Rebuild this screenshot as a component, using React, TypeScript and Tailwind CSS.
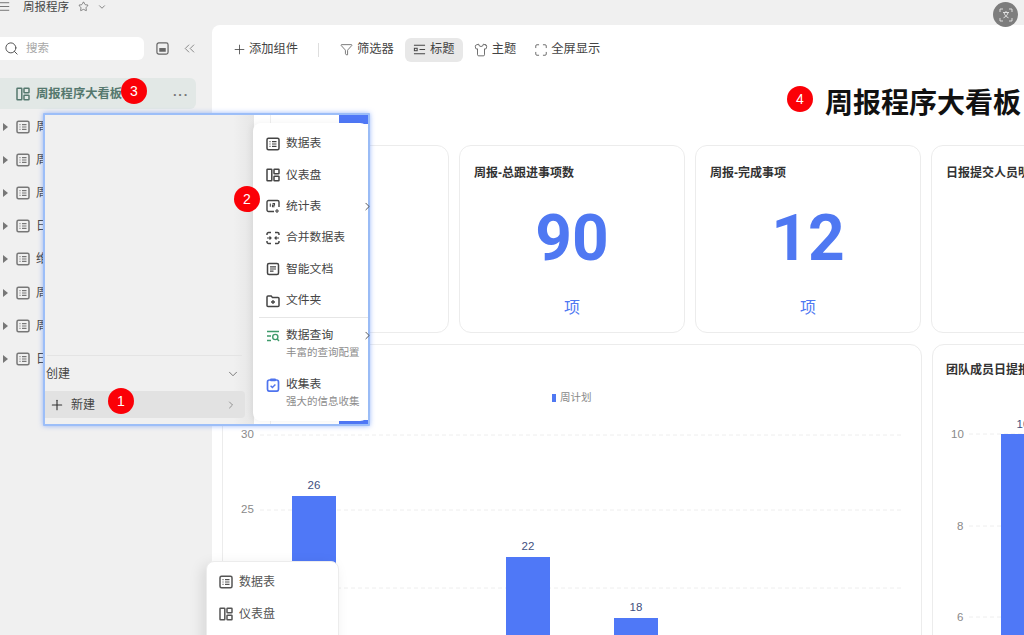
import { ChevronDown, ChevronRight, ChevronsLeft, Funnel, Maximize, Menu, Plus, Search, Shirt, Star } from "lucide-react";

const font = { cjk: "font-['Liberation_Sans','Noto_Sans_CJK_SC',sans-serif]" };

function TableIcon({ className = "" }: { className?: string }) {
  return (
    <svg viewBox="0 0 14 14" width="14" height="14" fill="none" stroke="currentColor" className={className}>
      <rect x="1" y="1.2" width="12" height="11.6" rx="1.5" strokeWidth="1.5" />
      <path d="M3.5 4.7h1M3.5 7h1M3.500 9.300h1M6 4.700h4.500M6 7h4.500M6 9.300h4.500" strokeWidth="1.2" />
    </svg>
  );
}

function BoardIcon({ className = "" }: { className?: string }) {
  return (
    <svg viewBox="0 0 14 14" width="14" height="14" fill="none" stroke="currentColor" strokeWidth="1.5" className={className}>
      <rect x="1" y="1.2" width="4.8" height="11.6" rx=".6" />
      <rect x="8" y="1.2" width="5" height="4.6" rx=".6" />
      <rect x="8" y="8.2" width="5" height="4.6" rx=".6" />
    </svg>
  );
}

function StatIcon() {
  return (
    <svg viewBox="0 0 14 14" width="14" height="14" fill="none" stroke="currentColor" strokeWidth="1.4">
      <path d="M8 12.5H2.500A1.500 1.500 0 0 1 1 11V3a1.500 1.500 0 0 1 1.500-1.500h9A1.500 1.500 0 0 1 13 3v5" />
      <path d="M4.300 4.500v3.300M6.500 4.500h2v1.600h-2v1.700h2M11 10v4M9 12h4" strokeWidth="1.1" />
    </svg>
  );
}

function MergeIcon() {
  return (
    <svg viewBox="0 0 14 14" width="14" height="14" fill="none" stroke="currentColor" strokeWidth="1.5">
      <path d="M1 4V3a1.500 1.500 0 0 1 1.500-1.500H5M9 1.500h2.500A1.500 1.500 0 0 1 13 3v1M13 10v1a1.500 1.500 0 0 1-1.500 1.500H9M5 12.500H2.500A1.500 1.500 0 0 1 1 11v-1" />
      <path d="M1 7h4M3.500 5.500 5 7 3.500 8.500M13 7H9M10.500 5.500 9 7l1.500 1.500" strokeWidth="1.200" />
    </svg>
  );
}

function DocIcon() {
  return (
    <svg viewBox="0 0 14 14" width="14" height="14" fill="none" stroke="currentColor" strokeWidth="1.5">
      <rect x="1.500" y="1.500" width="11" height="11" rx="1.500" />
      <path d="M4 4.800h6M4 7h6M4 9.200h3.500" strokeWidth="1.200" />
    </svg>
  );
}

function FolderIcon() {
  return (
    <svg viewBox="0 0 14 14" width="14" height="14" fill="none" stroke="currentColor" strokeWidth="1.5">
      <path d="M1 3a1 1 0 0 1 1-1h3.200l1.300 1.600H12a1 1 0 0 1 1 1V11.500a1 1 0 0 1-1 1H2a1 1 0 0 1-1-1z" />
      <path d="M7 6v4M5 8h4" strokeWidth="1.300" />
    </svg>
  );
}

function QueryIcon() {
  return (
    <svg viewBox="0 0 14 14" width="14" height="14" fill="none" stroke="#3f9b6b" strokeWidth="1.400">
      <path d="M1 2.500h12M1 7h4M1 11.500h4" />
      <circle cx="9.300" cy="8" r="2.600" />
      <path d="m11.200 10 1.800 2" />
    </svg>
  );
}

function FormIcon() {
  return (
    <svg viewBox="0 0 14 14" width="14" height="14" fill="none">
      <rect x="1.500" y="2" width="11" height="11.200" rx="2" stroke="#4f74ee" strokeWidth="1.700" />
      <rect x="4" y=".6" width="6" height="2.600" rx="1" fill="#4f74ee" />
      <path d="m4.600 7.800 1.800 1.800 3-3" stroke="#4f74ee" strokeWidth="1.400" />
    </svg>
  );
}

function TitleIcon() {
  return (
    <svg viewBox="0 0 14 14" width="13" height="13" fill="none" stroke="currentColor" strokeWidth="1.100">
      <path d="M1 2.500h12M1 11.500h12" />
      <rect x="1.500" y="5.700" width="3" height="2.600" />
      <path d="M7 7h6" />
    </svg>
  );
}

function Badge({ n, className }: { n: number; className: string }) {
  return (
    <div className={`absolute flex h-[26px] w-[26px] items-center justify-center rounded-full bg-[#fb0007] text-[14px] text-white font-['Liberation_Sans',sans-serif] ${className}`}>
      {n}
    </div>
  );
}

const sidebarRows = ["周报进度明细", "周报完成事项", "周报计划明细", "日报提交记录", "维护人员名单", "周报汇总信息", "周报提交记录", "日报汇总信息"];

function Sidebar() {
  return (
    <aside className="flex w-[212px] shrink-0 flex-col">
      <div className="mt-3 flex items-center">
        <div className="flex h-[23px] w-[144px] items-center gap-[7px] rounded-r-md bg-white pl-1 text-[11.5px] text-[#a8a8a8]">
          <Search size={15} strokeWidth={1.6} className="text-[#555]" />
          搜索
        </div>
        <svg viewBox="0 0 14 14" width="13" height="13" fill="none" className="ml-[12px] text-[#666]">
          <rect x="1" y="1" width="12" height="12" rx="2" stroke="currentColor" strokeWidth="1.300" />
          <rect x="3.500" y="6.500" width="7" height="4" fill="currentColor" />
        </svg>
        <ChevronsLeft size={17} strokeWidth={1.200} className="ml-[12px] text-[#777]" />
      </div>
      <div className="mt-[18px] flex h-[31px] w-[196px] items-center rounded-r-md bg-[#e2e8e6] pl-[16px] pr-[7px] pt-[1px] text-[12.300px] font-bold text-[#55786e]">
        <BoardIcon className="mr-[6px]" />
        周报程序大看板
        <span className="ml-auto text-[13px] leading-none tracking-[1px] text-[#777]">···</span>
      </div>
      <div className="mt-[1px] flex flex-col">
        {sidebarRows.map((name) => (
          <div key={name} className="flex h-[33.200px] items-center pl-[3px] text-[12px] text-[#444]">
            <span className="mr-[8px] h-0 w-0 border-y-[4px] border-l-[5px] border-y-transparent border-l-[#777]" />
            <TableIcon className="mr-[6px] text-[#777]" />
            {name}
          </div>
        ))}
      </div>
    </aside>
  );
}

function Toolbar() {
  return (
    <div className="flex h-[48px] shrink-0 items-center pl-[20px] pt-[1px] text-[12.250px] text-[#444]">
      <Plus size={15} strokeWidth={1.300} className="mr-[2px]" />
      添加组件
      <span className="ml-[20px] mr-[21px] h-[14px] w-px bg-[#dedede]" />
      <Funnel size={13} strokeWidth={1.300} className="mr-[4px]" />
      筛选器
      <div className="ml-[11px] mr-[11px] flex h-[24px] w-[58px] items-center justify-center gap-[4px] rounded-md bg-[#e8e8e8]">
        <TitleIcon />
        标题
      </div>
      <Shirt size={14} strokeWidth={1.300} className="mr-[4px]" />
      主题
      <Maximize size={14} strokeWidth={1.300} className="ml-[18px] mr-[3px]" />
      全屏显示
    </div>
  );
}

function StatCard({ title, value }: { title: string; value: number }) {
  return (
    <div className="flex h-[188px] w-[226px] shrink-0 flex-col rounded-xl border border-[#ececec] px-[14px] pt-[18px]">
      <div className="mt-[1px] text-[12px] font-bold leading-[17px] text-[#333] whitespace-nowrap">{title}</div>
      <div className="mt-[17px] text-center font-['Roboto',sans-serif] text-[64px] font-bold leading-[80px] text-[#4f78f2]">{value}</div>
      <div className="mt-[17px] text-center text-[16px] leading-[24px] text-[#4f78f2]">项</div>
    </div>
  );
}

const weekBars = [
  { x: 70, y: 151, label: 26 },
  { x: 284, y: 212, label: 22 },
  { x: 392, y: 273, label: 18 },
];

function WeekChart() {
  return (
    <div className="h-[300px] w-[700px] shrink-0 rounded-t-xl border border-[#ececec]">
      <svg width="698" height="298" className="font-['Liberation_Sans',sans-serif]">
        <rect x="329" y="49" width="4" height="8" fill="#4f78f2" />
        <text x="337" y="56" fontSize="10.500" fill="#888" fontFamily="'Noto Sans CJK SC',sans-serif">周计划</text>
        {[{ y: 90, v: 30 }, { y: 165, v: 25 }, { y: 243, v: 20 }].map((t) => (
          <g key={t.v}>
            <line x1="37" x2="679" y1={t.y} y2={t.y} stroke="#eeeeee" strokeDasharray="4 3" />
            <text x="18" y={t.y + 3} fontSize="11.500" fill="#8a8a8a">{t.v}</text>
          </g>
        ))}
        {weekBars.map((b) => (
          <g key={b.label}>
            <rect x={b.x - 1} y={b.y} width="44" height="300" fill="#4f78f7" />
            <text x={b.x + 21} y={b.y - 7} fontSize="11.500" textAnchor="middle" fill="#3f5080">{b.label}</text>
          </g>
        ))}
      </svg>
    </div>
  );
}

function MemberChart() {
  return (
    <div className="h-[300px] w-[400px] shrink-0 rounded-t-xl border border-[#ececec]">
      <div className="pl-[13px] pt-[17px] text-[12px] font-bold leading-[17px] text-[#333]">团队成员日提报统计</div>
      <svg width="398" height="260" className="font-['Liberation_Sans',sans-serif]">
        {[{ y: 55, v: 10, x: 18 }, { y: 147, v: 8, x: 24 }, { y: 238, v: 6, x: 24 }].map((t) => (
          <g key={t.v}>
            <line x1="36" x2="380" y1={t.y} y2={t.y} stroke="#eeeeee" strokeDasharray="4 3" />
            <text x={t.x} y={t.y + 4} fontSize="11.500" fill="#8a8a8a">{t.v}</text>
          </g>
        ))}
        <rect x="68" y="55" width="44" height="210" fill="#4f78f7" />
        <text x="90" y="49" fontSize="11.500" textAnchor="middle" fill="#3f5080">10</text>
      </svg>
    </div>
  );
}

function MenuRow({ icon, label, arrow, sub }: { icon: React.ReactNode; label: string; arrow?: boolean; sub?: string }) {
  return (
    <div className={`relative flex text-[#444] ${sub ? "h-[49px] pt-[9px]" : "h-[31.400px] items-center"}`}>
      <span className="ml-[13px] mr-[6px] flex h-[17px] w-[14px] items-center">{icon}</span>
      <div>
        <div className="text-[11.800px] leading-[17px]">{label}</div>
        {sub && <div className="mt-[1px] text-[10.500px] leading-[15px] text-[#8c8c8c] whitespace-nowrap">{sub}</div>}
      </div>
      {arrow && <ChevronRight size={13} strokeWidth={1.800} className={`absolute right-[-6px] text-[#555] ${sub ? "top-[11px]" : "top-[9px]"}`} />}
    </div>
  );
}

function CreatePopup() {
  return (
    <div className="absolute left-[43px] top-[113px] flex h-[313px] w-[327px] rounded-[1px] border-2 border-[#9cbef8] bg-white shadow-[0_0_5px_rgba(90,140,250,.6)]">
      {/* left column */}
      <div className="flex w-[209px] shrink-0 flex-col justify-end bg-[#f0f0f0] bg-gradient-to-r from-[#f0f0f0] from-90% to-[#e6e6e6] pb-[6px]">
        <div className="ml-[2px] w-[195px] border-t border-[#e4e4e4]" />
        <div className="flex h-[35px] items-center pl-[1px] pr-[7px] text-[12px] text-[#444]">
          创建
          <ChevronDown size={14} strokeWidth={1.300} className="ml-auto mr-[7px] text-[#555]" />
        </div>
        <div className="flex h-[27px] w-[200px] items-center rounded-r-sm bg-[#e2e2e2] pl-[4px] pr-[8px] text-[12px] text-[#444]">
          <Plus size={16} strokeWidth={1.700} className="mr-[6px] text-[#333]" />
          新建
          <ChevronRight size={12} strokeWidth={1.300} className="ml-auto text-[#666]" />
        </div>
      </div>
      {/* right column */}
      <div className="relative flex-1">
        <div className="absolute right-0 top-0 h-[9px] w-[29px] bg-[#4f78f7]" />
        <div className="absolute bottom-0 right-0 h-[4px] w-[29px] bg-[#4f78f7]" />
        <div className="absolute left-[16px] top-0 h-full w-px bg-[#eeeeee]" />
        <div className="absolute left-[-1px] right-0 top-[8px] flex h-[298px] flex-col rounded-lg bg-white pt-[5px] shadow-[-2px_0_6px_rgba(0,0,0,.06)]">
          <MenuRow icon={<TableIcon />} label="数据表" />
          <MenuRow icon={<BoardIcon />} label="仪表盘" />
          <MenuRow icon={<StatIcon />} label="统计表" arrow />
          <MenuRow icon={<MergeIcon />} label="合并数据表" />
          <MenuRow icon={<DocIcon />} label="智能文档" />
          <MenuRow icon={<FolderIcon />} label="文件夹" />
          <div className="ml-[6px] mt-[1px] border-t border-[#e6e6e6]" />
          <MenuRow icon={<QueryIcon />} label="数据查询" arrow sub="丰富的查询配置" />
          <MenuRow icon={<FormIcon />} label="收集表" sub="强大的信息收集" />
        </div>
      </div>
    </div>
  );
}

export default function App() {
  return (
    <div className={`relative flex h-[635px] w-[1024px] flex-col overflow-hidden bg-[#f0f0f0] ${font.cjk}`}>
      {/* top bar */}
      <div className="flex h-[25px] shrink-0 items-start text-[#444]">
        <Menu size={13} strokeWidth={1.300} className="ml-[-2px]" />
        <span className="ml-[12px] text-[11.500px] leading-[14px]">周报程序</span>
        <Star size={11} strokeWidth={1.300} className="ml-[9px] mt-[1px]" />
        <ChevronDown size={10} strokeWidth={1.500} className="ml-[8px] mt-[2px]" />
      </div>

      <div className="flex min-h-0 flex-1">
        <Sidebar />
        <main className="flex min-w-0 flex-1 flex-col overflow-hidden rounded-tl-lg bg-white">
          <Toolbar />
          <h1 className="mt-[14px] whitespace-nowrap pl-[613px] text-[28px] font-bold leading-[34px] text-[#111]">周报程序大看板</h1>
          <div className="ml-[11px] mt-[24px] flex gap-[10px]">
            <StatCard title="周报-本周事项数" value={8} />
            <StatCard title="周报-总跟进事项数" value={90} />
            <StatCard title="周报-完成事项" value={12} />
            <StatCard title="日报提交人员明细" value={8} />
          </div>
          <div className="ml-[10px] mt-[11px] flex gap-[10px]">
            <WeekChart />
            <MemberChart />
          </div>
        </main>
      </div>

      <CreatePopup />

      {/* bottom menu */}
      <div className="absolute left-[206px] top-[561px] flex h-[90px] w-[133px] flex-col gap-[12px] rounded-lg border border-[#ececec] bg-white pl-[12px] pt-[10px] text-[12px] text-[#555] shadow-[-4px_4px_14px_rgba(0,0,0,.1)]">
        <div className="flex h-[20px] items-center gap-[6px]"><TableIcon />数据表</div>
        <div className="flex h-[20px] items-center gap-[6px]"><BoardIcon />仪表盘</div>
      </div>

      {/* translate button */}
      <div className="absolute left-[993px] top-[2px] flex h-[25px] w-[25px] items-center justify-center rounded-full bg-[#7d7d7d]">
        <svg viewBox="0 0 14 14" width="14" height="14" fill="none" stroke="#e8e8e8" strokeWidth=".9">
          <path d="M1 4V1h3M10 1h3v3M13 10v3h-3M4 13H1v-3" />
          <path d="M4 4.500h6M7 3v1.500M5 4.500c.5 2.500 2 4.200 4.500 5.300M9 4.500C8.500 7 7 8.700 4.500 9.800" />
        </svg>
      </div>

      <Badge n={3} className="left-[121px] top-[78px]" />
      <Badge n={2} className="left-[234px] top-[186px]" />
      <Badge n={1} className="left-[108px] top-[388px]" />
      <Badge n={4} className="left-[787px] top-[86px]" />
    </div>
  );
}
